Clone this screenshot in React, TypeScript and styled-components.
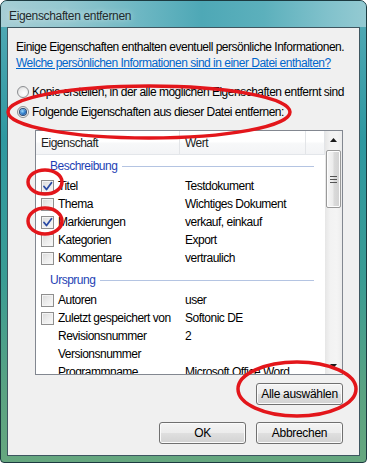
import React from "react";
import styled, { createGlobalStyle } from "styled-components";

const GlobalStyle = createGlobalStyle`
  html, body { margin: 0; padding: 0; background: #ffffff; }
  body {
    font-family: "Liberation Sans", Arial, sans-serif;
    font-size: 12px;
    letter-spacing: -0.5px;
    color: #000;
  }
  * { box-sizing: border-box; }
`;

const Window = styled.div`
  position: relative;
  width: 367px;
  height: 463px;
  border: 1px solid #1c3a40;
  border-radius: 7px 7px 4px 4px;
  background: linear-gradient(180deg, #55abb7 0%, #2e98a0 30%, #3a9c94 60%, #5aa382 85%, #66a77f 100%);
  display: flex;
  flex-direction: column;
  overflow: hidden;
`;

const TitleBar = styled.div`
  height: 26px;
  flex: none;
  display: flex;
  align-items: center;
  padding: 3px 0 0 8px;
  background: linear-gradient(90deg, #a6ced5 0%, #93c7cf 18%, #6db7c3 38%, #4ea8b6 55%, #5cb0bc 72%, #82c2cc 90%, #94cad2 100%);
`;

const Title = styled.span`
  font-size: 12px;
  letter-spacing: -0.35px;
  color: #1f2a2c;
  text-shadow: 0 0 6px rgba(255, 255, 255, 0.7);
`;

const Panel = styled.div`
  flex: 1;
  margin: 0 6px 6px 6px;
  border: 1px solid #3e5660;
  background: #f0f0f0;
  padding: 11px 16px 0 8px;
  display: flex;
  flex-direction: column;
`;

const Line = styled.div`
  height: 16px;
  line-height: 16px;
  white-space: nowrap;
`;

const Link = styled.a`
  display: block;
  height: 16px;
  line-height: 16px;
  color: #0066cc;
  text-decoration: underline;
  white-space: nowrap;
  cursor: pointer;
`;

const RadioGroup = styled.div`
  margin-top: 11px;
  display: flex;
  flex-direction: column;
`;

const RadioRow = styled.label`
  height: 20px;
  display: flex;
  align-items: center;
  gap: 3px;
  padding-left: 1px;
  white-space: nowrap;
`;

const RadioCircle = styled.span<{ $on?: boolean }>`
  width: 12px;
  height: 12px;
  border-radius: 50%;
  border: 1px solid #8c8e91;
  background: radial-gradient(circle at 60% 65%, #ffffff 0%, #f2f2f2 45%, #d4d4d4 100%);
  display: flex;
  align-items: center;
  justify-content: center;
  flex: none;
  &::after {
    content: "";
    display: ${(p) => (p.$on ? "block" : "none")};
    width: 6px;
    height: 6px;
    border-radius: 50%;
    background: radial-gradient(circle at 40% 35%, #9fdcff 0%, #2a78c8 55%, #0f3f85 100%);
    box-shadow: 0 0 0 1px #2c4d78;
  }
`;

const ListBox = styled.div`
  margin: 8px 0 0 19px;
  width: 308px;
  height: 245px;
  border: 1px solid #828790;
  background: #ffffff;
  display: flex;
  flex: none;
`;

const ListMain = styled.div`
  flex: 1;
  display: flex;
  flex-direction: column;
  overflow: hidden;
`;

const Header = styled.div`
  height: 24px;
  flex: none;
  display: grid;
  grid-template-columns: 144px 126px 1fr;
  background: linear-gradient(180deg, #ffffff 0%, #ffffff 45%, #f7f8f9 55%, #f3f4f6 100%);
  border-bottom: 1px solid #e3e6ea;
`;

const HeaderCell = styled.div`
  display: flex;
  align-items: center;
  padding-left: 5px;
  border-right: 1px solid #e3e5e8;
  color: #1e1e1e;
  white-space: nowrap;
`;

const GroupRow = styled.div<{ $gapTop?: number }>`
  height: 22px;
  margin-top: ${(p) => p.$gapTop ?? 0}px;
  display: flex;
  align-items: center;
  gap: 5px;
  padding: 0 11px 0 14px;
  color: #1e3fb4;
  flex: none;
`;

const GroupLine = styled.div`
  flex: 1;
  height: 1px;
  background: #b4c4e2;
`;

const ItemRow = styled.div`
  height: 18px;
  flex: none;
  display: grid;
  grid-template-columns: 144px 1fr;
  align-items: center;
  white-space: nowrap;
`;

const NameCell = styled.div`
  display: flex;
  align-items: center;
  gap: 4px;
  padding-left: 5px;
`;

const ValueCell = styled.div`
  padding-left: 5px;
`;

const Box = styled.span<{ $hidden?: boolean }>`
  width: 13px;
  height: 13px;
  flex: none;
  visibility: ${(p) => (p.$hidden ? "hidden" : "visible")};
  border: 1px solid #8f8f8f;
  background: linear-gradient(135deg, #d9d9d9 0%, #ececec 50%, #fafafa 100%);
  box-shadow: inset 0 0 0 1px #f4f4f4;
  display: flex;
  align-items: center;
  justify-content: center;
`;

const ScrollBar = styled.div`
  width: 17px;
  flex: none;
  display: flex;
  flex-direction: column;
  background: linear-gradient(90deg, #e6e6e6 0%, #f2f2f2 30%, #f4f4f4 70%, #ececec 100%);
`;

const ArrowButton = styled.div`
  height: 17px;
  flex: none;
  display: flex;
  align-items: center;
  justify-content: center;
`;

const Track = styled.div`
  flex: 1;
  padding: 2px 1px 0 1px;
`;

const Thumb = styled.div`
  height: 58px;
  border: 1px solid #9a9a9a;
  border-radius: 2px;
  background: linear-gradient(90deg, #f6f6f6 0%, #ececec 45%, #dadada 55%, #d2d2d2 100%);
  box-shadow: inset 0 0 0 1px #fdfdfd;
  display: flex;
  align-items: center;
  justify-content: center;
`;

const ButtonRow = styled.div<{ $top: number }>`
  margin-top: ${(p) => p.$top}px;
  display: flex;
  justify-content: flex-end;
  gap: 10px;
`;

const Button = styled.button`
  width: 87px;
  height: 22px;
  padding: 0;
  font-family: inherit;
  font-size: 12px;
  letter-spacing: -0.3px;
  color: #000;
  border: 1px solid #707070;
  border-radius: 3px;
  background: linear-gradient(180deg, #f4f4f4 0%, #ececec 48%, #dfdfdf 52%, #d2d2d2 100%);
  box-shadow: inset 0 0 0 1px #fbfbfb;
`;

const Annotations = styled.svg`
  position: absolute;
  left: 0;
  top: 0;
  width: 367px;
  height: 463px;
  pointer-events: none;
`;

const Check = () => (
  <svg width="11" height="11" viewBox="0 0 11 11">
    <path d="M2 5.5 L4.5 8.5 L9.5 1.8" fill="none" stroke="#2a4aa3" strokeWidth="1.8" strokeLinecap="round" strokeLinejoin="round" />
  </svg>
);

const UpArrow = () => (
  <svg width="7" height="4" viewBox="0 0 7 4">
    <path d="M0 4 L3.5 0 L7 4 Z" fill="#1a1a1a" />
  </svg>
);

const DownArrow = () => (
  <svg width="7" height="4" viewBox="0 0 7 4">
    <path d="M0 0 L3.5 4 L7 0 Z" fill="#1a1a1a" />
  </svg>
);

const Grip = () => (
  <svg width="7" height="7" viewBox="0 0 7 7">
    <path d="M0 0.5 H7 M0 3.5 H7 M0 6.5 H7" stroke="#555" strokeWidth="1" />
  </svg>
);

type Item = { name: string; value?: string; box?: boolean; checked?: boolean };

const groups: { title: string; gap: number; items: Item[] }[] = [
  {
    title: "Beschreibung",
    gap: 0,
    items: [
      { name: "Titel", value: "Testdokument", box: true, checked: true },
      { name: "Thema", value: "Wichtiges Dokument", box: true },
      { name: "Markierungen", value: "verkauf, einkauf", box: true, checked: true },
      { name: "Kategorien", value: "Export", box: true },
      { name: "Kommentare", value: "vertraulich", box: true },
    ],
  },
  {
    title: "Ursprung",
    gap: 2,
    items: [
      { name: "Autoren", value: "user", box: true },
      { name: "Zuletzt gespeichert von", value: "Softonic DE", box: true },
      { name: "Revisionsnummer", value: "2" },
      { name: "Versionsnummer", value: "" },
      { name: "Programmname", value: "Microsoft Office Word" },
    ],
  },
];

export default function App() {
  return (
    <>
      <GlobalStyle />
      <Window>
        <TitleBar>
          <Title>Eigenschaften entfernen</Title>
        </TitleBar>
        <Panel>
          <Line>Einige Eigenschaften enthalten eventuell persönliche Informationen.</Line>
          <Link>Welche persönlichen Informationen sind in einer Datei enthalten?</Link>
          <RadioGroup>
            <RadioRow>
              <RadioCircle />
              Kopie erstellen, in der alle möglichen Eigenschaften entfernt sind
            </RadioRow>
            <RadioRow>
              <RadioCircle $on />
              Folgende Eigenschaften aus dieser Datei entfernen:
            </RadioRow>
          </RadioGroup>
          <ListBox>
            <ListMain>
              <Header>
                <HeaderCell>Eigenschaft</HeaderCell>
                <HeaderCell>Wert</HeaderCell>
                <HeaderCell />
              </Header>
              {groups.map((g) => (
                <React.Fragment key={g.title}>
                  <GroupRow $gapTop={g.gap}>
                    {g.title}
                    <GroupLine />
                  </GroupRow>
                  {g.items.map((it) => (
                    <ItemRow key={it.name}>
                      <NameCell>
                        <Box $hidden={!it.box}>{it.checked ? <Check /> : null}</Box>
                        {it.name}
                      </NameCell>
                      <ValueCell>{it.value}</ValueCell>
                    </ItemRow>
                  ))}
                </React.Fragment>
              ))}
            </ListMain>
            <ScrollBar>
              <ArrowButton>
                <UpArrow />
              </ArrowButton>
              <Track>
                <Thumb>
                  <Grip />
                </Thumb>
              </Track>
              <ArrowButton>
                <DownArrow />
              </ArrowButton>
            </ScrollBar>
          </ListBox>
          <ButtonRow $top={8}>
            <Button>Alle auswählen</Button>
          </ButtonRow>
          <ButtonRow $top={17}>
            <Button>OK</Button>
            <Button>Abbrechen</Button>
          </ButtonRow>
        </Panel>
        <Annotations viewBox="0 0 367 463">
          <g fill="none" stroke="#e3161b" strokeWidth="3.5">
            <ellipse cx="148" cy="111" rx="141" ry="26" />
            <ellipse cx="44" cy="181" rx="17" ry="12" />
            <ellipse cx="44" cy="220" rx="17" ry="13" />
            <ellipse cx="296" cy="388" rx="59" ry="27" />
          </g>
        </Annotations>
      </Window>
    </>
  );
}
